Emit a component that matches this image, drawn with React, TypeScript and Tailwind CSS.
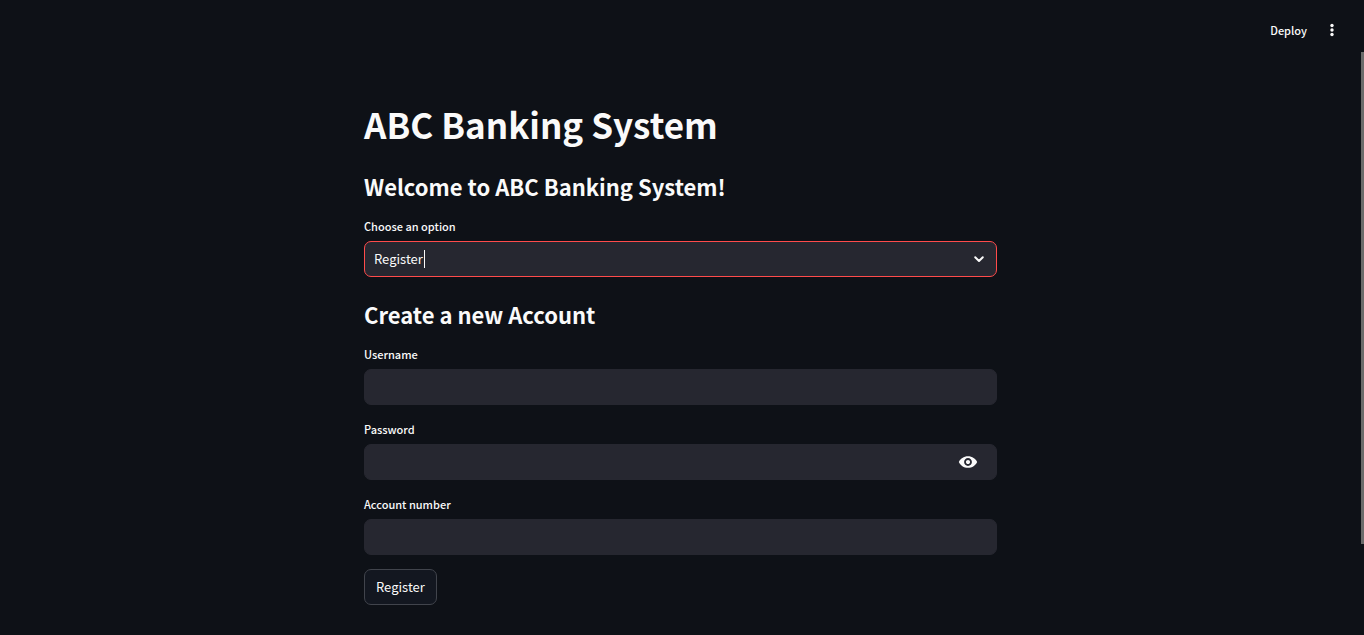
import { useState } from 'react';
import type { InputHTMLAttributes, ReactNode } from 'react';

type FieldProps = InputHTMLAttributes<HTMLInputElement> & {
  id: string;
  label: string;
  trailing?: ReactNode;
};

function Label({ htmlFor, children }: { htmlFor: string; children: ReactNode }) {
  return (
    <label htmlFor={htmlFor} className="flex h-5 items-center text-[11px] leading-5 font-medium">
      {children}
    </label>
  );
}

function Field({ id, label, trailing, ...input }: FieldProps) {
  return (
    <div className="flex flex-col gap-[5px]">
      <Label htmlFor={id}>{label}</Label>
      <div className="flex h-9 items-center rounded-[7px] border border-[#262730] bg-[#262730] focus-within:border-[#ff4b4b]">
        <input id={id} className="h-full min-w-0 flex-1 bg-transparent px-[9px] text-[13px] outline-none" {...input} />
        {trailing}
      </div>
    </div>
  );
}

function EyeIcon() {
  return (
    <svg viewBox="0 0 24 24" className="size-5" fill="currentColor" aria-hidden="true">
      <path d="M12 5C7 5 2.73 7.91 1 12c1.73 4.09 6 7 11 7s9.27-2.91 11-7c-1.73-4.09-6-7-11-7zM12 16.700c-2.600 0-4.700-2.100-4.700-4.700s2.100-4.700 4.700-4.700 4.700 2.100 4.700 4.700-2.100 4.700-4.700 4.700zm0-7.200c-1.380 0-2.500 1.120-2.500 2.500s1.120 2.500 2.500 2.500 2.500-1.120 2.500-2.500-1.120-2.500-2.500-2.500z" />
    </svg>
  );
}

export default function App() {
  const [option, setOption] = useState('Register');
  const [visible, setVisible] = useState(false);

  return (
    <div className="relative min-h-screen bg-[#0e1117] pr-[3px] font-['Noto_Sans_CJK_SC','Noto_Sans',sans-serif] text-[#fafafa]">
      <header className="flex h-[60px] items-center justify-end gap-[11px] pr-[19px]">
        <button type="button" className="px-1 text-[11px] leading-5 font-medium">Deploy</button>
        <button type="button" aria-label="Main menu" className="flex size-5 items-center justify-center">
          <svg viewBox="0 0 20 20" className="size-5" fill="currentColor" aria-hidden="true">
            <circle cx="10" cy="5.5" r="1.7" />
            <circle cx="10" cy="10" r="1.7" />
            <circle cx="10" cy="14.5" r="1.7" />
          </svg>
        </button>
      </header>

      <main className="mx-auto flex max-w-[633px] flex-col pt-[38px] pb-7">
        <h1 className="text-[35px] leading-[52px] font-bold">ABC Banking System</h1>
        <h2 className="mt-[18px] text-[22px] leading-9 font-bold">Welcome to ABC Banking System!</h2>

        <div className="mt-3 flex flex-col gap-[5px]">
          <Label htmlFor="option">Choose an option</Label>
          <div className="relative flex h-9 items-center rounded-[7px] border border-[#ff4b4b] bg-[#262730]">
            <select
              id="option"
              value={option}
              onChange={(e) => setOption(e.target.value)}
              className="h-full w-full appearance-none bg-transparent px-[9px] text-[13px] outline-none"
            >
              <option className="bg-[#262730]">Login</option>
              <option className="bg-[#262730]">Register</option>
            </select>
            <span className="pointer-events-none absolute left-[59px] h-[18px] w-px bg-[#fafafa]" />
            <svg viewBox="0 0 18 18" className="pointer-events-none absolute right-2 size-[18px]" fill="none" stroke="currentColor" strokeWidth="2" strokeLinecap="round" strokeLinejoin="round" aria-hidden="true">
              <path d="M5.200 7.200l3.800 3.800 3.800-3.800" />
            </svg>
          </div>
        </div>

        <h2 className="mt-[19px] text-[22px] leading-9 font-bold">Create a new Account</h2>

        <form className="mt-3 flex flex-col gap-[14px]" onSubmit={(e) => e.preventDefault()}>
          <Field id="username" label="Username" type="text" autoComplete="username" />
          <Field
            id="password"
            label="Password"
            type={visible ? 'text' : 'password'}
            autoComplete="new-password"
            trailing={
              <button type="button" aria-label="Show password text" onClick={() => setVisible(!visible)} className="flex h-full items-center px-[18px]">
                <EyeIcon />
              </button>
            }
          />
          <Field id="account" label="Account number" type="text" />
          <button type="submit" className="flex h-9 items-center self-start rounded-[7px] border border-[#41444c] bg-[#131720] px-[11px] text-[13px] leading-5">
            Register
          </button>
        </form>
      </main>

      <div className="absolute top-[52px] right-0 h-[492px] w-[3px] bg-[#6b6b6b]" />
    </div>
  );
}
